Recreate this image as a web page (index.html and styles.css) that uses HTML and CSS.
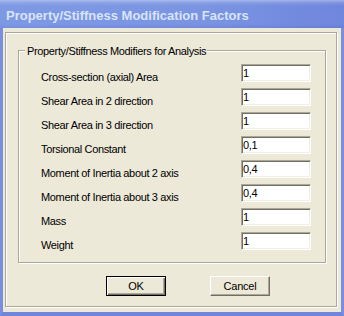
FILE: index.html
```html
<!DOCTYPE html>
<html>
<head>
  <title>Property/Stiffness Modification Factors</title>
  <link rel="stylesheet" href="styles.css">
</head>
<body>
  <div class="window">
    <div class="titlebar">Property/Stiffness Modification Factors</div>
    <div class="client">
      <div class="frame">
        <div class="group">
          <div class="group-title">Property/Stiffness Modifiers for Analysis</div>
          <div class="rows">
            <label for="area">Cross-section (axial) Area</label>
            <input type="text" id="area" value="1" />

            <label for="shear2">Shear Area in 2 direction</label>
            <input type="text" id="shear2" value="1" />

            <label for="shear3">Shear Area in 3 direction</label>
            <input type="text" id="shear3" value="1" />

            <label for="torsion">Torsional Constant</label>
            <input type="text" id="torsion" value="0,1" />

            <label for="inertia2">Moment of Inertia about 2 axis</label>
            <input type="text" id="inertia2" value="0,4" />

            <label for="inertia3">Moment of Inertia about 3 axis</label>
            <input type="text" id="inertia3" value="0,4" />

            <label for="mass">Mass</label>
            <input type="text" id="mass" value="1" />

            <label for="weight">Weight</label>
            <input type="text" id="weight" value="1" />
          </div>
        </div>
        <div class="buttons">
          <button class="btn btn-default">OK</button>
          <button class="btn">Cancel</button>
        </div>
      </div>
    </div>
  </div>
</body>
</html>
```

FILE: styles.css
```css
body {
  margin: 0;
  background: #ece9d8;
  font-family: "Liberation Sans", Arial, sans-serif;
}
.window {
  width: 344px;
  height: 316px;
  display: flex;
  flex-direction: column;
}
.titlebar {
  height: 28px;
  box-sizing: border-box;
  padding: 3px 0 0 6px;
  line-height: 25px;
  font-size: 13px;
  font-weight: bold;
  color: #d8e4f8;
  white-space: nowrap;
  background:
    linear-gradient(to bottom, rgba(255,255,255,0.35) 0, rgba(255,255,255,0.1) 3px, rgba(255,255,255,0) 6px, rgba(0,0,0,0) 24px, rgba(40,60,170,0.12) 28px),
    linear-gradient(to right, #7e99e4, #7a94e2 60%, #6f86dd);
}
.client {
  flex: 1;
  background: #ece9d8;
  border-left: 3px solid #7a8ddf;
  border-right: 3px solid #7a8ddf;
  border-bottom: 4px solid #7185dc;
  padding: 4px 4px 4px 2px;
}
.frame {
  height: 275px;
  box-sizing: border-box;
  border: 1px solid #aca899;
  box-shadow: inset 1px 1px #fff, 1px 1px #fff;
  padding: 0 0 10px 12px;
}
.group {
  margin-top: 17px;
  width: 308px;
  height: 213px;
  box-sizing: border-box;
  border: 1px solid #aca899;
  box-shadow: inset 1px 1px #fff, 1px 1px #fff;
}
.group-title {
  width: max-content;
  margin: -6px 0 0 6px;
  padding: 0 1px 0 2px;
  background: #ece9d8;
  font-size: 11px;
  line-height: 13px;
  letter-spacing: -0.35px;
  color: #000;
}
.rows {
  margin-top: 6px;
  padding: 0 14px 0 22px;
  display: grid;
  grid-template-columns: 1fr 70px;
  grid-auto-rows: 24px;
}
.rows label {
  padding-top: 7px;
  font-size: 11px;
  line-height: 13px;
  letter-spacing: -0.35px;
  color: #000;
  white-space: nowrap;
}
.rows input {
  width: 70px;
  height: 18px;
  box-sizing: border-box;
  margin: 0;
  padding: 0 1px;
  border: 1px solid;
  border-color: #aca899 #fff #fff #aca899;
  box-shadow: inset 1px 1px #716f64, inset -1px -1px #f1efe2;
  background: #fff;
  font-family: "Liberation Sans", Arial, sans-serif;
  font-size: 11px;
  letter-spacing: -0.35px;
  color: #000;
  outline: none;
}
.buttons {
  display: flex;
  gap: 44px;
  margin: 13px 0 0 88px;
}
.btn {
  width: 60px;
  height: 20px;
  box-sizing: border-box;
  margin: 0;
  padding: 0;
  border: 1px solid;
  border-color: #fff #716f64 #716f64 #fff;
  box-shadow: inset -1px -1px #aca899;
  background: #ece9d8;
  font-family: "Liberation Sans", Arial, sans-serif;
  font-size: 11px;
  letter-spacing: -0.2px;
  color: #000;
}
.btn-default {
  border-color: #000;
  box-shadow: inset 1px 1px #fff, inset -1px -1px #716f64, inset -2px -2px #aca899;
}
```
